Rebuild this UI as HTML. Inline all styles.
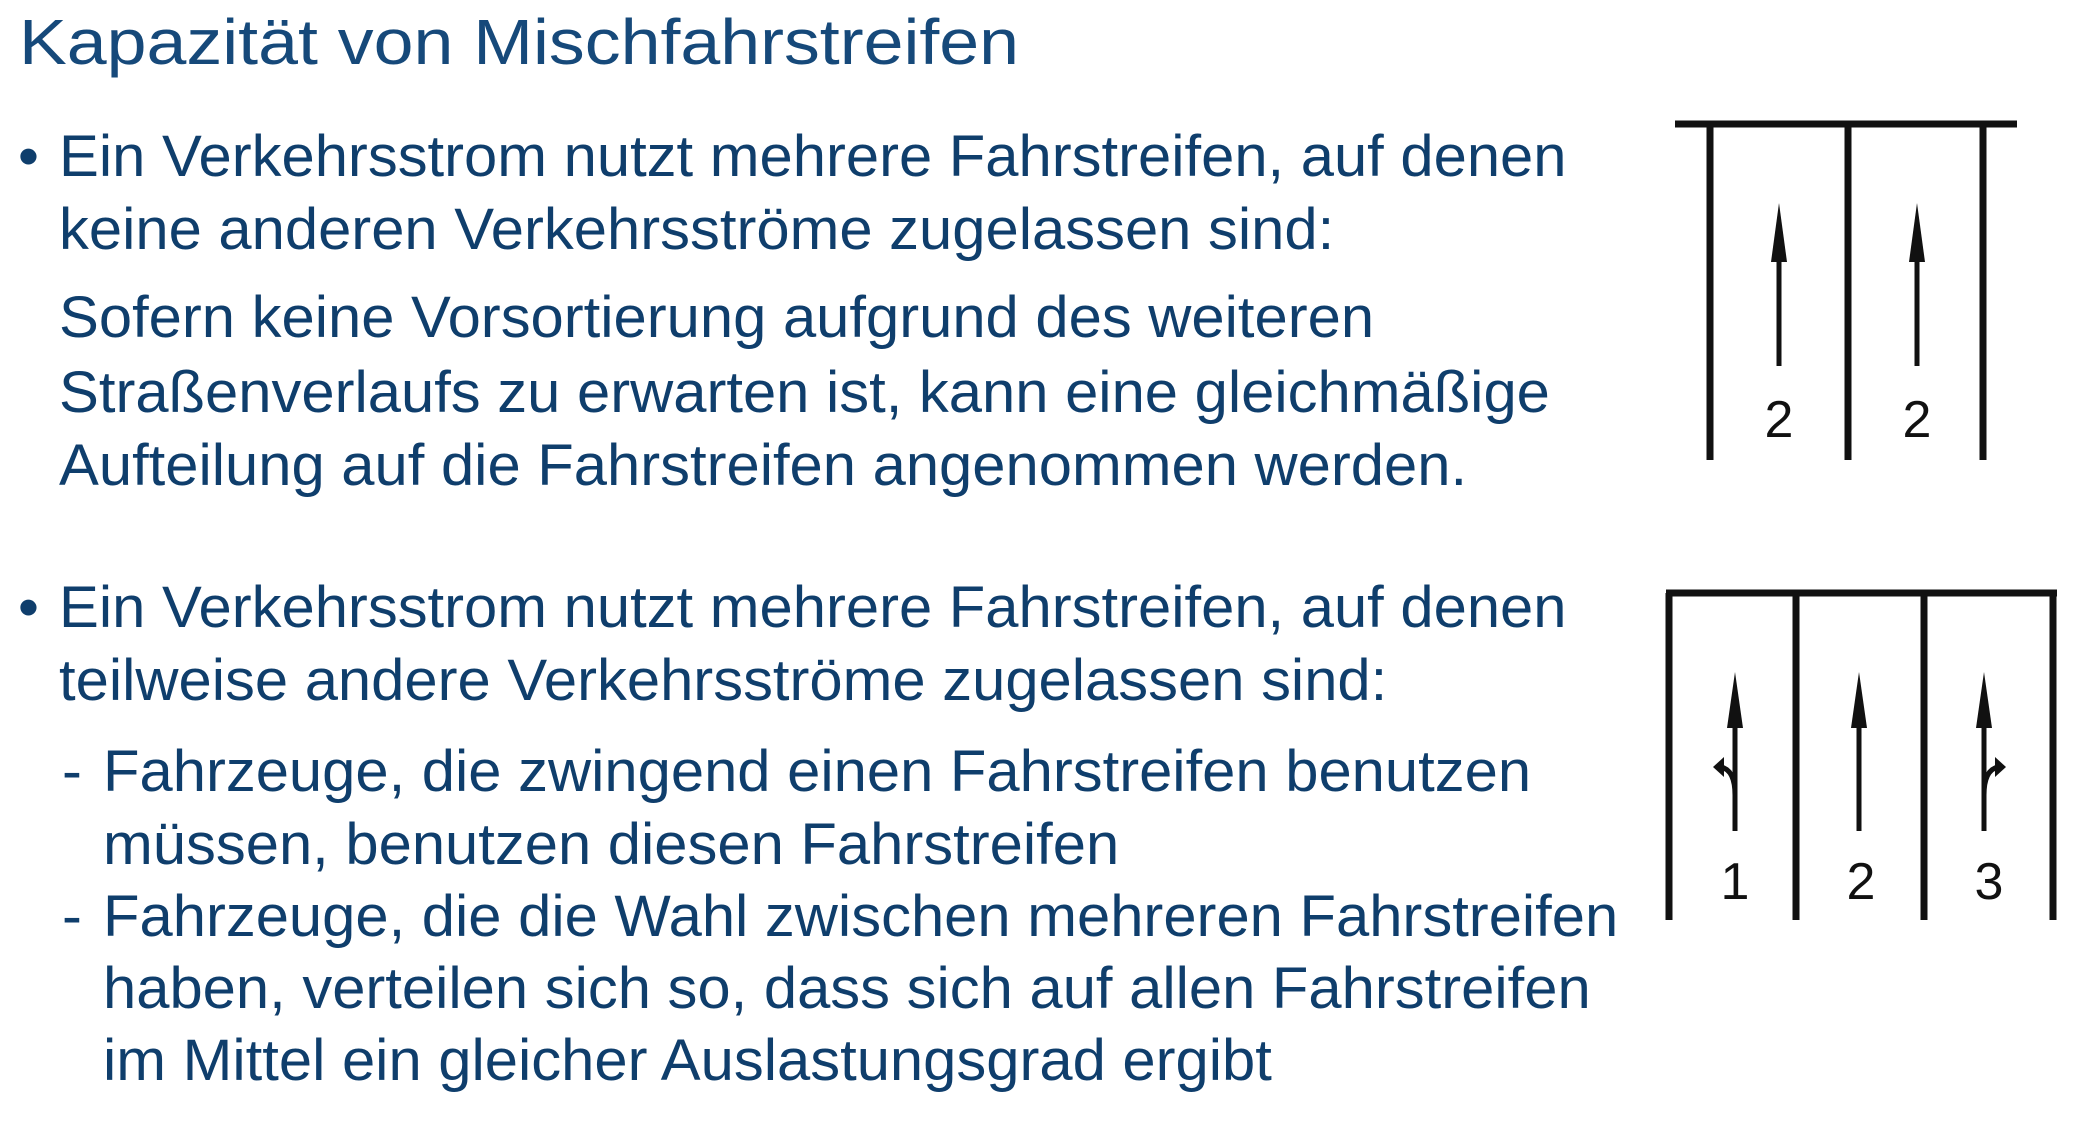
<!DOCTYPE html>
<html><head><meta charset="utf-8"><style>
html,body{margin:0;padding:0;background:#fff;}
body{width:2088px;height:1144px;position:relative;overflow:hidden;font-family:"Liberation Sans",Arial,sans-serif;color:#0f3e6c;}
.l{position:absolute;font-size:58px;line-height:58px;white-space:nowrap;transform:scaleX(1.03);transform-origin:0 0;}
.t{font-size:64px;line-height:64px;color:#16497a;transform:scaleX(1.12);}
</style></head><body>
<div class="l t" style="left:19px;top:10px">Kapazität von Mischfahrstreifen</div>
<div class="l" style="left:18px;top:128px">•</div>
<div class="l" style="left:59px;top:128px">Ein Verkehrsstrom nutzt mehrere Fahrstreifen, auf denen</div>
<div class="l" style="left:59px;top:201px">keine anderen Verkehrsströme zugelassen sind:</div>
<div class="l" style="left:59px;top:289px">Sofern keine Vorsortierung aufgrund des weiteren</div>
<div class="l" style="left:59px;top:364px">Straßenverlaufs zu erwarten ist, kann eine gleichmäßige</div>
<div class="l" style="left:59px;top:437px">Aufteilung auf die Fahrstreifen angenommen werden.</div>
<div class="l" style="left:18px;top:579px">•</div>
<div class="l" style="left:59px;top:579px">Ein Verkehrsstrom nutzt mehrere Fahrstreifen, auf denen</div>
<div class="l" style="left:59px;top:652px">teilweise andere Verkehrsströme zugelassen sind:</div>
<div class="l" style="left:62px;top:743px">-</div>
<div class="l" style="left:103px;top:743px">Fahrzeuge, die zwingend einen Fahrstreifen benutzen</div>
<div class="l" style="left:103px;top:816px">müssen, benutzen diesen Fahrstreifen</div>
<div class="l" style="left:62px;top:888px">-</div>
<div class="l" style="left:103px;top:888px">Fahrzeuge, die die Wahl zwischen mehreren Fahrstreifen</div>
<div class="l" style="left:103px;top:960px">haben, verteilen sich so, dass sich auf allen Fahrstreifen</div>
<div class="l" style="left:103px;top:1032px">im Mittel ein gleicher Auslastungsgrad ergibt</div>
<svg width="2088" height="1144" style="position:absolute;left:0;top:0" xmlns="http://www.w3.org/2000/svg">
<g transform="translate(-9,0)">
<g stroke="#111" stroke-width="7" fill="none">
<line x1="1684" y1="124" x2="2026" y2="124"/>
<line x1="1719" y1="124" x2="1719" y2="460"/>
<line x1="1857" y1="124" x2="1857" y2="460"/>
<line x1="1992" y1="124" x2="1992" y2="460"/>
<line x1="1675" y1="593" x2="2066" y2="593"/>
<line x1="1678" y1="593" x2="1678" y2="920"/>
<line x1="1805" y1="593" x2="1805" y2="920"/>
<line x1="1933" y1="593" x2="1933" y2="920"/>
<line x1="2062" y1="593" x2="2062" y2="920"/>
</g>
<g stroke="#111" stroke-width="5" fill="none">
<line x1="1788" y1="250" x2="1788" y2="366"/>
<line x1="1926" y1="250" x2="1926" y2="366"/>
<line x1="1744" y1="715" x2="1744" y2="831"/>
<line x1="1868" y1="715" x2="1868" y2="831"/>
<line x1="1993" y1="715" x2="1993" y2="831"/>
<path d="M1744 795 Q1744 770 1730 767"/>
<path d="M1993 795 Q1993 770 2007 767"/>
</g>
<g fill="#111">
<polygon points="1788,203 1780,262 1796,262"/>
<polygon points="1926,203 1918,262 1934,262"/>
<polygon points="1744,672 1736,728 1752,728"/>
<polygon points="1868,672 1860,728 1876,728"/>
<polygon points="1993,672 1985,728 2001,728"/>
<polygon points="1722,767 1733,757 1733,777"/>
<polygon points="2015,767 2004,757 2004,777"/>
</g>
<g font-family="Liberation Sans, Arial, sans-serif" font-size="52" fill="#111" text-anchor="middle">
<text x="1788" y="437">2</text>
<text x="1926" y="437">2</text>
<text x="1744" y="899">1</text>
<text x="1870" y="899">2</text>
<text x="1998" y="899">3</text>
</g>
</g>
</svg>
</body></html>
